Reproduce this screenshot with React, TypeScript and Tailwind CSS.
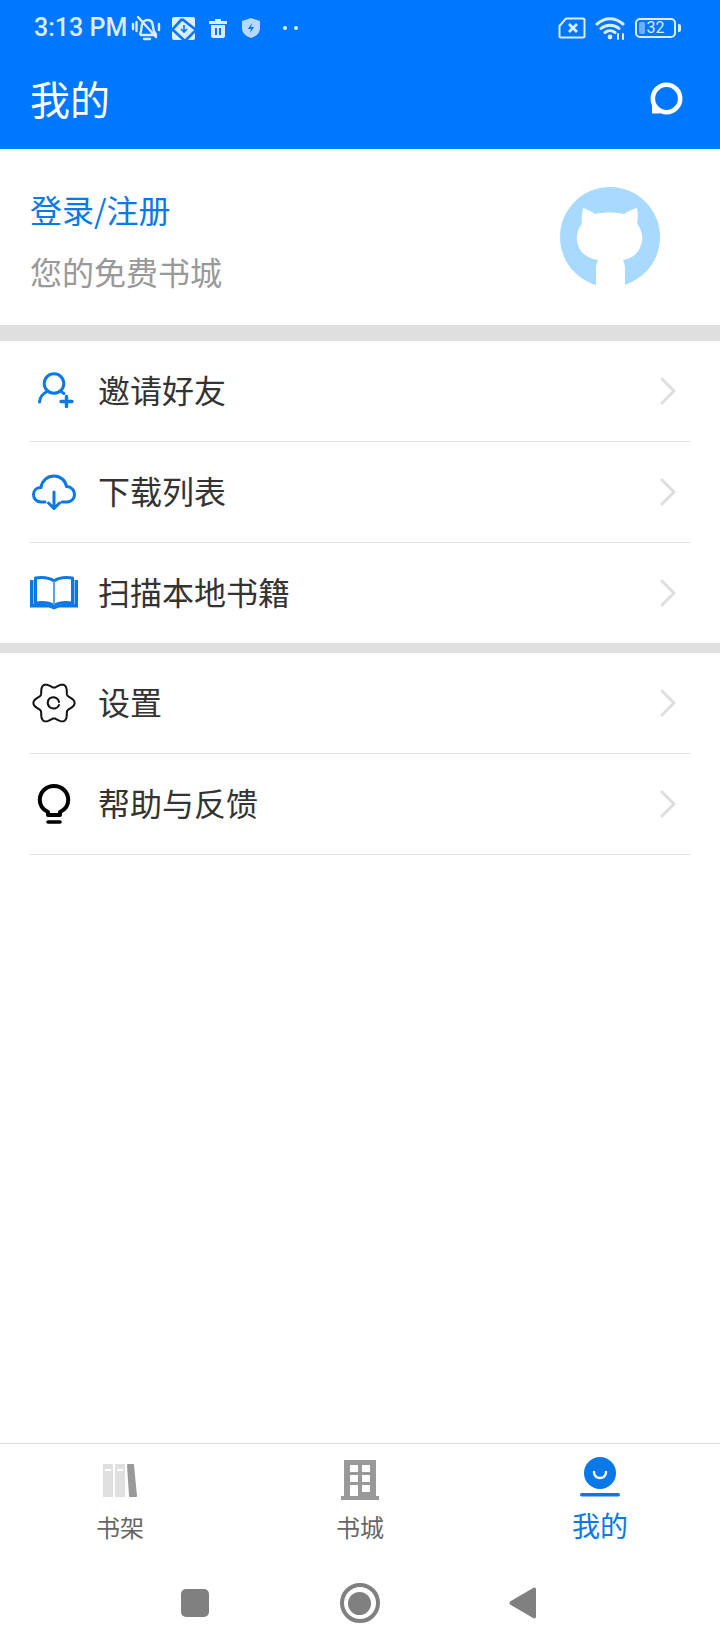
import React from 'react';

const cjk = { fontFamily: '"Noto Sans CJK SC", sans-serif' };

// six-lobed outline of the settings gear
const gearPath = Array.from({ length: 120 }, (_, i) => {
  const a = (i * 3 * Math.PI) / 180;
  const r = 18 + 2.6 * Math.cos(6 * a);
  return `${i === 0 ? 'M' : 'L'}${(24 + r * Math.cos(a)).toFixed(2)} ${(20 + r * Math.sin(a)).toFixed(2)}`;
}).join(' ') + ' Z';

const Chevron = () => (
  <svg width="18" height="30" viewBox="0 0 18 30" className="shrink-0" fill="none">
    <path d="M3 3 L15 15 L3 27" stroke="#dedede" strokeWidth="3" strokeLinecap="round" strokeLinejoin="round" />
  </svg>
);

const UserPlus = () => (
  <svg width="48" height="40" viewBox="0 0 48 40" fill="none" stroke="#0b78e8" strokeLinecap="round">
    <circle cx="24" cy="12.5" r="9.8" strokeWidth="3" />
    <path d="M9.5 31 C10 26 13 22.5 17 20.5 M31 20.5 C32 21 33 21.5 34 22.5" strokeWidth="3" />
    <path d="M31 30.5 H42 M36.5 25.5 V35.5" strokeWidth="3.4" />
  </svg>
);

const CloudDown = () => (
  <svg width="48" height="40" viewBox="0 0 48 40" fill="none" stroke="#0b78e8" strokeWidth="3" strokeLinecap="round" strokeLinejoin="round">
    <path d="M15 30 H11 C6 30 3.5 26 3.5 22.5 C3.5 18 7 15.5 11 15.5 C12 8.5 17.5 4 24 4 C30.5 4 35.5 8.5 36.5 14.5 C41.5 14.5 44.5 18.5 44.5 22.5 C44.5 26.5 41.5 30 37 30 H32" />
    <path d="M24 20 V36 M18.5 31 L24 36.5 L29.5 31" />
  </svg>
);

const Book = () => (
  <svg width="48" height="40" viewBox="0 0 48 40" fill="none">
    <path d="M24 8 C19 4.5 12 4 5.5 5 V30 C12 29 19 29.5 24 32.5 C29 29.5 36 29 42.5 30 V5 C36 4 29 4.5 24 8 Z" stroke="#0b78e8" strokeWidth="3" strokeLinejoin="round" />
    <path d="M24 8 V32" stroke="#5a9fe8" strokeWidth="2" />
    <path d="M0 7 H3.5 V31 C11 30 18 31 24 33.5 C30 31 37 30 44.5 31 V7 H48 V34.5 H29 L24 36.5 L19 34.5 H0 Z" fill="#0b78e8" />
  </svg>
);

const Gear = () => (
  <svg width="48" height="40" viewBox="0 0 48 40" fill="none" stroke="#111" strokeWidth="2" strokeLinecap="round" strokeLinejoin="round">
    <path d={gearPath} />
    <path d="M29 22 C27.5 26 22.5 26.5 19.5 24 C16.5 21 17.5 15.5 21.5 14.5 C25 13.5 28.5 15.5 29 19" />
  </svg>
);

const Bulb = () => (
  <svg width="48" height="40" viewBox="0 0 48 40" fill="none" stroke="#000" strokeLinecap="round">
    <path d="M18 31 V28 C12.5 25.5 9.8 21 9.8 16 C9.8 8 16 2 24 2 C32 2 38.2 8 38.2 16 C38.2 21 35.5 25.5 30 28 V31 Z" strokeWidth="4" strokeLinejoin="round" />
    <path d="M18 38 H30" strokeWidth="3.6" />
  </svg>
);

const rows1 = [
  { icon: <UserPlus />, label: '邀请好友' },
  { icon: <CloudDown />, label: '下载列表' },
  { icon: <Book />, label: '扫描本地书籍' },
];

const rows2 = [
  { icon: <Gear />, label: '设置' },
  { icon: <Bulb />, label: '帮助与反馈' },
];

const Row = ({ icon, label, border = true }: { icon: React.ReactNode; label: string; border?: boolean }) => (
  <div className={`mx-[30px] flex items-center pr-[13px] ${border ? 'h-[101px] border-b border-[#e0e0e0]' : 'h-[100px]'}`}>
    <div className="w-[68px] shrink-0">{icon}</div>
    <span className="flex-1 pb-[4px] text-[32px] leading-[40px] text-[#333333]">{label}</span>
    <Chevron />
  </div>
);

const StatusBar = () => (
  <div className="flex h-[56px] items-center pl-[34px] pr-[39px] text-[#dcecff]">
    <span className="text-[25px] font-medium leading-[28px]" style={{ fontFamily: 'Roboto, sans-serif' }}>3:13 PM</span>
    <svg className="ml-[4px]" width="30" height="26" viewBox="0 0 30 26" fill="none" stroke="currentColor" strokeWidth="2.4" strokeLinecap="round">
      <path d="M9 19 C11 16 10 11 11.5 8 C13 5 17 4 20 6 C22.5 8 21.5 13 23 16 C24 18 25 19 25 20 H10 M13 24 H19 M7 2 L25 22 M2 9 V14 M5.5 7 V16 M28 9 V15" />
    </svg>
    <svg className="ml-[11px]" width="23" height="23" viewBox="0 0 23 23">
      <rect x="0" y="0" width="23" height="23" rx="2" fill="currentColor" />
      <path d="M-1 14 L10 2 M10 2 L24 13 M13 24 L23 14 M1 13 L13 24" stroke="#0077ff" strokeWidth="2.6" fill="none" />
      <path d="M12 8 V14 M9 12 L12 15 L15 12" stroke="#0077ff" strokeWidth="1.6" fill="none" />
    </svg>
    <svg className="ml-[13px]" width="20" height="21" viewBox="0 0 20 21">
      <path d="M7 1 H13 V3 H19 V6 H1 V3 H7 Z M3 7 H17 V18 Q17 20 15 20 H5 Q3 20 3 18 Z" fill="currentColor" />
      <path d="M8 10 V17 M12 10 V17" stroke="#0077ff" strokeWidth="2" />
    </svg>
    <svg className="ml-[13px]" width="20" height="22" viewBox="0 0 20 22">
      <path d="M10 1 L19 4 V11 C19 16 15 19.5 10 21 C5 19.5 1 16 1 11 V4 Z" fill="#b7d8ff" />
      <path d="M11 6 L7 12 H10 L9 16 L13 10 H10 Z" fill="#0077ff" />
    </svg>
    <div className="ml-[22px] h-[4px] w-[4px] rounded-full bg-[#dcecff]" />
    <div className="ml-[7px] h-[4px] w-[4px] rounded-full bg-[#dcecff]" />
    <div className="flex-1" />
    <svg width="28" height="22" viewBox="0 0 28 22" fill="none" stroke="currentColor" strokeWidth="2" strokeLinejoin="round">
      <path d="M8 1.5 H25 Q26.5 1.5 26.5 3 V19 Q26.5 20.5 25 20.5 H3 Q1.5 20.5 1.5 19 V9 Z" />
      <path d="M11 7 L19 15 M19 7 L11 15" strokeWidth="2.8" />
    </svg>
    <svg className="ml-[9px]" width="32" height="24" viewBox="0 0 32 24" fill="none" stroke="currentColor" strokeLinecap="round">
      <path d="M2 8 C10 1 20 1 28 8 M6 12.5 C11 8 19 8 24 12.5 M10 16.5 C13 14 17 14 20 16.5" strokeWidth="3" />
      <circle cx="15" cy="21" r="2.4" fill="currentColor" stroke="none" />
      <path d="M23 18 V23 M28 18 V23" strokeWidth="2" />
    </svg>
    <div className="relative ml-[8px] flex h-[20px] w-[41px] items-center justify-center rounded-[5px] border-2 border-[#dcecff]">
      <div className="absolute bottom-[2px] left-[2px] top-[2px] w-[6px] rounded-[2px] bg-[#6fb0ff]" />
      <span className="text-[16px] leading-[16px]" style={{ fontFamily: 'Roboto, sans-serif' }}>32</span>
    </div>
    <div className="ml-[2px] h-[8px] w-[3px] rounded-r-[2px] bg-[#dcecff]" />
  </div>
);

const Avatar = () => (
  <svg width="100" height="100" viewBox="0 0 100 100">
    <circle cx="50" cy="50" r="50" fill="#a8d9ff" />
    <path d="M23 21 C27 22 32 25 35 27 C44 25 55 25 64 27 C67 25 72 22 77 21 C78 27 78 32 77 36 C81 42 83 48 82 54 C80 66 72 72 63 73 C64 75 65 78 65 82 V100 H36 V82 C36 78 37 75 38 73 C28 72 19 66 17 54 C16 48 18 42 22 36 C21 32 22 27 23 21 Z" fill="#ffffff" />
  </svg>
);

const NavItem = ({ icon, label, active = false }: { icon: React.ReactNode; label: string; active?: boolean }) => (
  <div className="flex flex-1 flex-col items-center">
    <div className="flex h-[60px] items-end justify-center">{icon}</div>
    <span className={active ? 'mt-[1px] text-[28px] leading-[40px] text-[#0b78e8]' : 'mt-[4px] text-[24px] leading-[38px] text-[#666666]'}>{label}</span>
  </div>
);

const Shelf = () => (
  <svg className="mb-[6px]" width="36" height="34" viewBox="0 0 36 34">
    <rect x="1" y="0" width="10" height="33" fill="#e0e0e0" />
    <rect x="13" y="0" width="10" height="33" fill="#e0e0e0" />
    <rect x="3" y="5" width="6" height="2" fill="#ffffff" />
    <rect x="15" y="5" width="6" height="2" fill="#ffffff" />
    <path d="M25 1 Q25 0 26 0 H31 Q32 0 32 1 L35 32 Q35 33 34 33 H28 Q27 33 27 32 Z" fill="#999999" />
  </svg>
);

const Building = () => (
  <svg className="mb-[4px]" width="38" height="40" viewBox="0 0 38 40">
    <path d="M3 0 H35 V36 H38 V40 H0 V36 H3 Z" fill="#999999" />
    <rect x="9" y="5" width="8" height="7" fill="#ffffff" />
    <rect x="21" y="5" width="8" height="7" fill="#ffffff" />
    <rect x="9" y="15" width="8" height="7" fill="#ffffff" />
    <rect x="21" y="15" width="8" height="7" fill="#ffffff" />
    <rect x="9" y="25" width="8" height="11" fill="#ffffff" />
    <rect x="21" y="25" width="8" height="7" fill="#ffffff" />
  </svg>
);

const Me = () => (
  <svg className="mb-[7px]" width="40" height="40" viewBox="0 0 40 40">
    <circle cx="20" cy="16" r="16" fill="#0b78e8" />
    <path d="M14 15 C14 23 26 23 26 15" fill="none" stroke="#ffffff" strokeWidth="2.4" strokeLinecap="round" />
    <rect x="0" y="36" width="40" height="3.5" rx="1.7" fill="#0b78e8" />
  </svg>
);

export default function App() {
  return (
    <div className="flex h-[1650px] w-[720px] flex-col bg-white" style={cjk}>
      <div className="h-[149px] bg-[#0077ff]">
        <StatusBar />
        <div className="flex h-[93px] items-center justify-between pb-[9px] pl-[30px] pr-[37px]">
          <span className="text-[40px] leading-[50px] text-white">我的</span>
          <svg width="33" height="33" viewBox="0 0 33 33" fill="none">
            <path d="M2 23 V31.5 H10 Z" fill="#ffffff" />
            <circle cx="16.5" cy="16.5" r="13.7" stroke="#ffffff" strokeWidth="4.6" />
          </svg>
        </div>
      </div>

      <div className="flex h-[176px] items-center justify-between pl-[30px] pr-[60px]">
        <div className="flex flex-col pt-[5px]">
          <span className="text-[32px] leading-[44px] text-[#0b78e8]">登录/注册</span>
          <span className="mt-[18px] text-[32px] leading-[44px] text-[#999999]">您的免费书城</span>
        </div>
        <Avatar />
      </div>

      <div className="h-[16px] bg-[#dfdfdf]" />
      {rows1.map((r, i) => (
        <Row key={r.label} icon={r.icon} label={r.label} border={i < rows1.length - 1} />
      ))}
      <div className="h-[10px] bg-[#dfdfdf]" />
      {rows2.map((r) => (
        <Row key={r.label} icon={r.icon} label={r.label} />
      ))}

      <div className="flex-1" />

      <div className="h-[102px] border-t border-[#e0e0e0]">
        <div className="flex">
          <NavItem icon={<Shelf />} label="书架" />
          <NavItem icon={<Building />} label="书城" />
          <NavItem icon={<Me />} label="我的" active />
        </div>
      </div>

      <div className="flex h-[105px] items-start justify-center pr-[4px]">
        <div className="mt-[38px] flex items-center">
          <div className="h-[28px] w-[28px] rounded-[5px] bg-[#808080]" />
          <div className="ml-[131px] flex h-[40px] w-[40px] items-center justify-center rounded-full border-[4px] border-[#808080]">
            <div className="h-[23px] w-[23px] rounded-full bg-[#808080]" />
          </div>
          <svg className="ml-[129px]" width="27" height="32" viewBox="0 0 27 32">
            <path d="M25 0.5 Q27 0 27 2.5 V29.5 Q27 32 25 31.5 L1 17.5 Q0 16 1 14.5 Z" fill="#808080" />
          </svg>
        </div>
      </div>
    </div>
  );
}
